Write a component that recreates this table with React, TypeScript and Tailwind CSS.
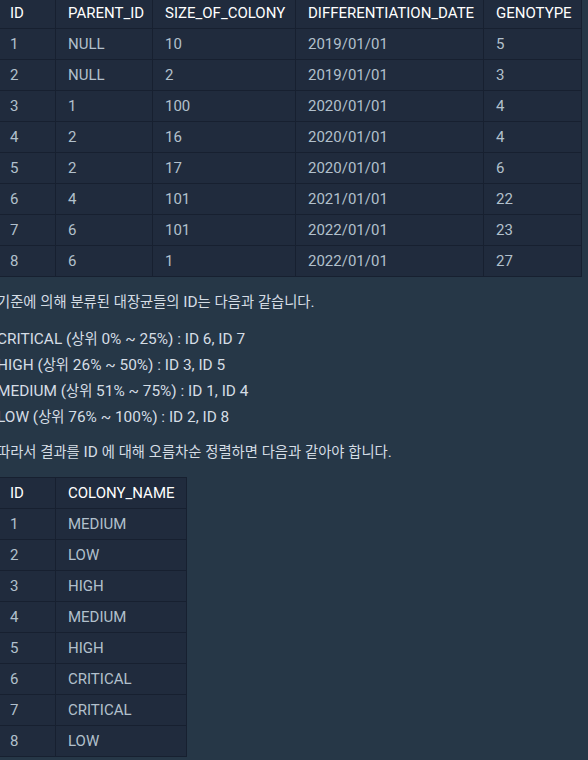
type Row = string[];

const colonies: Row[] = [
  ["1", "NULL", "10", "2019/01/01", "5"],
  ["2", "NULL", "2", "2019/01/01", "3"],
  ["3", "1", "100", "2020/01/01", "4"],
  ["4", "2", "16", "2020/01/01", "4"],
  ["5", "2", "17", "2020/01/01", "6"],
  ["6", "4", "101", "2021/01/01", "22"],
  ["7", "6", "101", "2022/01/01", "23"],
  ["8", "6", "1", "2022/01/01", "27"],
];

const result: Row[] = [
  ["1", "MEDIUM"],
  ["2", "LOW"],
  ["3", "HIGH"],
  ["4", "MEDIUM"],
  ["5", "HIGH"],
  ["6", "CRITICAL"],
  ["7", "CRITICAL"],
  ["8", "LOW"],
];

// hangul runs are set a bit smaller than the latin text
const Txt = ({ children }: { children: string }) => {
  const parts = children.split(/([\uAC00-\uD7A3]+)/);
  return (
    <>
      {parts.map((p, i) =>
        i % 2 === 1 ? (
          <span key={i} className="text-[14.3px]">
            {p}
          </span>
        ) : (
          <span key={i}>{p}</span>
        )
      )}
    </>
  );
};

interface TableProps {
  head: string[];
  widths: string[];
  width: string;
  rows: Row[];
}

const DataTable = ({ head, widths, width, rows }: TableProps) => {
  return (
    <table className={`${width} table-fixed border-collapse bg-[#202b3d] text-[15px] leading-[20px]`}>
      <colgroup>
        {widths.map((w, i) => (
          <col key={i} className={w} />
        ))}
      </colgroup>
      <thead>
        <tr>
          {head.map((h, i) => (
            <th
              key={i}
              className="h-[31px] px-3 text-left font-normal text-white border border-[#172030]"
            >
              {h}
            </th>
          ))}
        </tr>
      </thead>
      <tbody>
        {rows.map((row, r) => (
          <tr key={r}>
            {row.map((cell, c) => (
              <td
                key={c}
                className="h-[31px] px-3 text-[#b2c0cc] border border-[#172030]"
              >
                {cell}
              </td>
            ))}
          </tr>
        ))}
      </tbody>
    </table>
  );
};

export default function App() {
  return (
    <div className="w-[588px] h-[760px] overflow-hidden bg-[#263747] font-['Roboto','Noto_Sans_CJK_KR',sans-serif]">
      <div className="-ml-[3px] -mt-[3px] flex flex-col items-start text-[15.4px] leading-[26px] text-[#d5dde5]">
        <DataTable
          head={["ID", "PARENT_ID", "SIZE_OF_COLONY", "DIFFERENTIATION_DATE", "GENOTYPE"]}
          width="w-[584px]"
          widths={["w-[58px]", "w-[97px]", "w-[143px]", "w-[188px]", "w-[98px]"]}
          rows={colonies}
        />
        <p className="mt-3 h-[26px]">
          <Txt>기준에 의해 분류된 대장균들의 ID는 다음과 같습니다.</Txt>
        </p>
        <ul className="mt-[11px]">
          <li className="h-[26px]"><Txt>CRITICAL (상위 0% ~ 25%) : ID 6, ID 7</Txt></li>
          <li className="h-[26px]"><Txt>HIGH (상위 26% ~ 50%) : ID 3, ID 5</Txt></li>
          <li className="h-[26px]"><Txt>MEDIUM (상위 51% ~ 75%) : ID 1, ID 4</Txt></li>
          <li className="h-[26px]"><Txt>LOW (상위 76% ~ 100%) : ID 2, ID 8</Txt></li>
        </ul>
        <p className="mt-[9px] h-[26px]">
          <Txt>따라서 결과를 ID 에 대해 오름차순 정렬하면 다음과 같아야 합니다.</Txt>
        </p>
        <div className="mt-3">
          <DataTable
            head={["ID", "COLONY_NAME"]}
            width="w-[189px]"
            widths={["w-[58px]", "w-[131px]"]}
            rows={result}
          />
        </div>
      </div>
    </div>
  );
}
